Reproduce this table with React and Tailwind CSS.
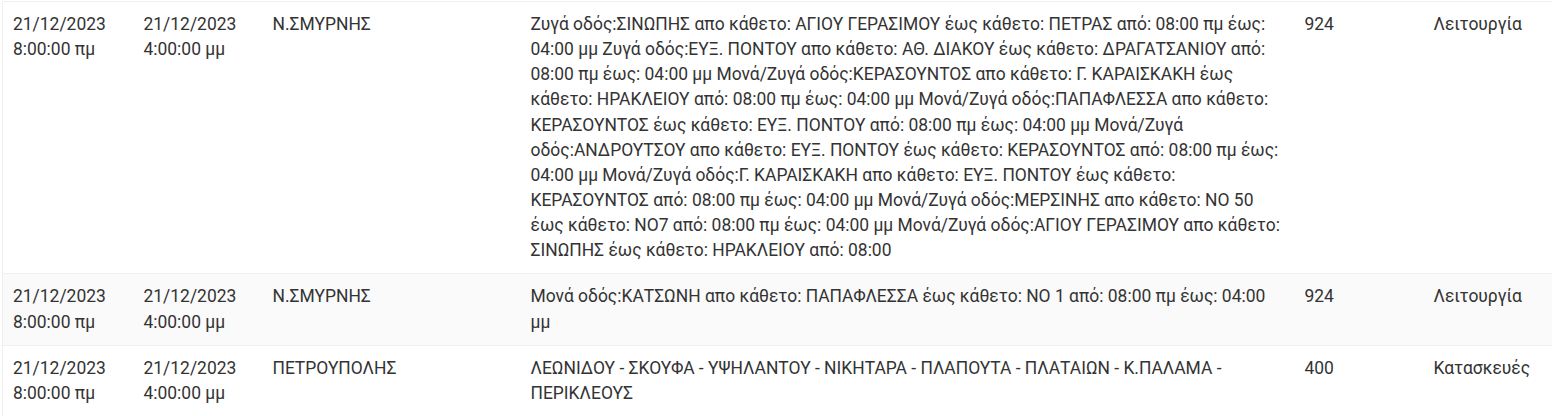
import React from "react";

const rows = [
  {
    from: "21/12/2023 8:00:00 πμ",
    to: "21/12/2023 4:00:00 μμ",
    area: "Ν.ΣΜΥΡΝΗΣ",
    streets:
      "Ζυγά οδός:ΣΙΝΩΠΗΣ απο κάθετο: ΑΓΙΟΥ ΓΕΡΑΣΙΜΟΥ έως κάθετο: ΠΕΤΡΑΣ από: 08:00 πμ έως: 04:00 μμ Ζυγά οδός:ΕΥΞ. ΠΟΝΤΟΥ απο κάθετο: ΑΘ. ΔΙΑΚΟΥ έως κάθετο: ΔΡΑΓΑΤΣΑΝΙΟΥ από: 08:00 πμ έως: 04:00 μμ Μονά/Ζυγά οδός:ΚΕΡΑΣΟΥΝΤΟΣ απο κάθετο: Γ. ΚΑΡΑΙΣΚΑΚΗ έως κάθετο: ΗΡΑΚΛΕΙΟΥ από: 08:00 πμ έως: 04:00 μμ Μονά/Ζυγά οδός:ΠΑΠΑΦΛΕΣΣΑ απο κάθετο: ΚΕΡΑΣΟΥΝΤΟΣ έως κάθετο: ΕΥΞ. ΠΟΝΤΟΥ από: 08:00 πμ έως: 04:00 μμ Μονά/Ζυγά οδός:ΑΝΔΡΟΥΤΣΟΥ απο κάθετο: ΕΥΞ. ΠΟΝΤΟΥ έως κάθετο: ΚΕΡΑΣΟΥΝΤΟΣ από: 08:00 πμ έως: 04:00 μμ Μονά/Ζυγά οδός:Γ. ΚΑΡΑΙΣΚΑΚΗ απο κάθετο: ΕΥΞ. ΠΟΝΤΟΥ έως κάθετο: ΚΕΡΑΣΟΥΝΤΟΣ από: 08:00 πμ έως: 04:00 μμ Μονά/Ζυγά οδός:ΜΕΡΣΙΝΗΣ απο κάθετο: ΝΟ 50 έως κάθετο: ΝΟ7 από: 08:00 πμ έως: 04:00 μμ Μονά/Ζυγά οδός:ΑΓΙΟΥ ΓΕΡΑΣΙΜΟΥ απο κάθετο: ΣΙΝΩΠΗΣ έως κάθετο: ΗΡΑΚΛΕΙΟΥ από: 08:00",
    code: "924",
    type: "Λειτουργία",
  },
  {
    from: "21/12/2023 8:00:00 πμ",
    to: "21/12/2023 4:00:00 μμ",
    area: "Ν.ΣΜΥΡΝΗΣ",
    streets:
      "Μονά οδός:ΚΑΤΣΩΝΗ απο κάθετο: ΠΑΠΑΦΛΕΣΣΑ έως κάθετο: ΝΟ 1 από: 08:00 πμ έως: 04:00 μμ",
    code: "924",
    type: "Λειτουργία",
  },
  {
    from: "21/12/2023 8:00:00 πμ",
    to: "21/12/2023 4:00:00 μμ",
    area: "ΠΕΤΡΟΥΠΟΛΗΣ",
    streets:
      "ΛΕΩΝΙΔΟΥ - ΣΚΟΥΦΑ - ΥΨΗΛΑΝΤΟΥ - ΝΙΚΗΤΑΡΑ - ΠΛΑΠΟΥΤΑ - ΠΛΑΤΑΙΩΝ - Κ.ΠΑΛΑΜΑ - ΠΕΡΙΚΛΕΟΥΣ",
    code: "400",
    type: "Κατασκευές",
  },
];

export default function App() {
  return (
    <div className="pt-px pl-[2px] bg-white font-['Roboto',sans-serif] text-[17.45px] leading-[25.14px] text-[#333]">
      <table className="w-[1550px] table-fixed border-collapse">
        <colgroup>
          <col className="w-[131px]" />
          <col className="w-[129px]" />
          <col className="w-[258px]" />
          <col className="w-[774px]" />
          <col className="w-[129px]" />
          <col className="w-[129px]" />
        </colgroup>
        <tbody>
          {rows.map((r, i) => (
            <tr
              key={i}
              className={`border-t border-b border-[#f0f0f0] ${i === 1 ? "bg-[#fafafa]" : "bg-white"}`}
            >
              <td className="align-top px-[10px] py-[10px] border-l border-[#f0f0f0]">{r.from}</td>
              <td className="align-top px-[10px] py-[10px]">{r.to}</td>
              <td className="align-top px-[10px] py-[10px]">{r.area}</td>
              <td className="align-top px-[10px] py-[10px]">{r.streets}</td>
              <td className="align-top px-[10px] py-[10px]">{r.code}</td>
              <td className="align-top px-[10px] py-[10px]">{r.type}</td>
            </tr>
          ))}
        </tbody>
      </table>
    </div>
  );
}
